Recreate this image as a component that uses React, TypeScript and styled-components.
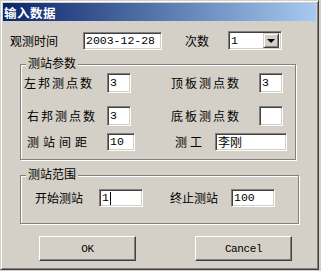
import React from "react";
import styled, { createGlobalStyle } from "styled-components";

const Global = createGlobalStyle`
  html, body { margin: 0; padding: 0; background: #d4d0c8; }
  * { box-sizing: border-box; }
`;

const cjk = `"Noto Sans CJK SC", "Noto Sans", sans-serif`;
const mono = `"Liberation Mono", "DejaVu Sans Mono", monospace`;

const Window = styled.div`
  width: 319px;
  height: 270px;
  background: #d4d0c8;
  border: 1px solid;
  border-color: #d4d0c8 #404040 #404040 #d4d0c8;
  box-shadow: inset 1px 1px #fff, inset -1px -1px #808080;
  padding: 2px;
  display: flex;
  flex-direction: column;
  font-family: ${cjk};
  font-size: 12px;
  color: #000;
`;

const TitleBar = styled.div`
  height: 18px;
  flex-shrink: 0;
  display: flex;
  align-items: center;
  padding-left: 1px;
  background: linear-gradient(to right, #0a246a, #a6caf0);
  color: #fff;
  font-weight: bold;
  font-size: 12.5px;
  letter-spacing: 0.5px;
`;

const Row = styled.div<{ $indent: number; $mt: number; $h: number }>`
  display: flex;
  align-items: center;
  padding-left: ${(p) => p.$indent}px;
  margin-top: ${(p) => p.$mt}px;
  height: ${(p) => p.$h}px;
`;

const Label = styled.span<{ $w: number; $ls?: number; $ml?: number }>`
  width: ${(p) => p.$w}px;
  margin-left: ${(p) => p.$ml ?? 0}px;
  letter-spacing: ${(p) => p.$ls ?? 0}px;
  flex-shrink: 0;
  white-space: nowrap;
  line-height: 14px;
`;

const TextBox = styled.div<{ $w: number; $h: number }>`
  width: ${(p) => p.$w}px;
  height: ${(p) => p.$h}px;
  flex-shrink: 0;
  background: #fff;
  border: 1px solid;
  border-color: #808080 #fff #fff #808080;
  box-shadow: inset 1px 1px #404040, inset -1px -1px #d4d0c8;
  display: flex;
  align-items: center;
  padding-left: 2px;
  font-family: ${mono};
  font-size: 11.5px;
  line-height: 12px;
  white-space: nowrap;
  overflow: hidden;
`;

const CjkText = styled.span`
  font-family: ${cjk};
  font-size: 12px;
`;

const Caret = styled.span`
  display: inline-block;
  width: 1px;
  height: 13px;
  background: #000;
  margin-left: 1px;
`;

const SelectBox = styled(TextBox)`
  padding-right: 2px;
  justify-content: space-between;
`;

const DropButton = styled.div`
  width: 16px;
  height: 15px;
  background: #d4d0c8;
  border: 1px solid;
  border-color: #d4d0c8 #404040 #404040 #d4d0c8;
  box-shadow: inset 1px 1px #fff, inset -1px -1px #808080;
  display: flex;
  align-items: center;
  justify-content: center;
`;

const Arrow = styled.span`
  width: 0;
  height: 0;
  border-left: 4px solid transparent;
  border-right: 4px solid transparent;
  border-top: 4px solid #000;
  margin-top: 1px;
`;

const Group = styled.div<{ $w: number; $mt: number; $pb: number }>`
  width: ${(p) => p.$w}px;
  margin-left: 17px;
  margin-top: ${(p) => p.$mt}px;
  padding-bottom: ${(p) => p.$pb}px;
  border: 1px solid #808080;
  box-shadow: inset 1px 1px #fff, 1px 1px #fff;
  display: flex;
  flex-direction: column;
`;

const Legend = styled.span`
  align-self: flex-start;
  margin-top: -8px;
  margin-left: 5px;
  padding: 0 2px;
  background: #d4d0c8;
  line-height: 12px;
  height: 12px;
  font-size: 12px;
`;

const ButtonRow = styled.div`
  display: flex;
  gap: 59px;
  padding-left: 36px;
  margin-top: 12px;
`;

const Button = styled.div`
  width: 97px;
  height: 25px;
  background: #d4d0c8;
  border: 1px solid;
  border-color: #fff #404040 #404040 #fff;
  box-shadow: inset -1px -1px #808080, inset 1px 1px #d4d0c8;
  display: flex;
  align-items: center;
  justify-content: center;
  font-family: ${mono};
  font-size: 11px;
  letter-spacing: -0.4px;
  padding-top: 1px;
`;

export default function App() {
  return (
    <>
      <Global />
      <Window>
        <TitleBar>输入数据</TitleBar>

        <Row $indent={7} $mt={10} $h={19}>
          <Label $w={73}>观测时间</Label>
          <TextBox $w={79} $h={18}>2003-12-28</TextBox>
          <Label $w={43} $ml={23}>次数</Label>
          <SelectBox $w={54} $h={19}>
            <span>1</span>
            <DropButton>
              <Arrow />
            </DropButton>
          </SelectBox>
        </Row>

        <Group $w={276} $mt={14} $pb={8}>
          <Legend>测站参数</Legend>
          <Row $indent={3} $mt={4} $h={20}>
            <Label $w={83} $ls={2}>左邦测点数</Label>
            <TextBox $w={24} $h={20}>3</TextBox>
            <Label $w={88} $ml={40} $ls={2}>顶板测点数</Label>
            <TextBox $w={24} $h={20}>3</TextBox>
          </Row>
          <Row $indent={6} $mt={13} $h={20}>
            <Label $w={80} $ls={2}>右邦测点数</Label>
            <TextBox $w={24} $h={20}>3</TextBox>
            <Label $w={88} $ml={40} $ls={2}>底板测点数</Label>
            <TextBox $w={24} $h={20} />
          </Row>
          <Row $indent={6} $mt={7} $h={18}>
            <Label $w={80} $ls={4}>测站间距</Label>
            <TextBox $w={28} $h={18}>10</TextBox>
            <Label $w={40} $ml={40} $ls={3}>测工</Label>
            <TextBox $w={72} $h={18}>
              <CjkText>李刚</CjkText>
            </TextBox>
          </Row>
        </Group>

        <Group $w={279} $mt={15} $pb={16}>
          <Legend>测站范围</Legend>
          <Row $indent={14} $mt={9} $h={18}>
            <Label $w={64}>开始测站</Label>
            <TextBox $w={44} $h={18}>
              1<Caret />
            </TextBox>
            <Label $w={61} $ml={27}>终止测站</Label>
            <TextBox $w={44} $h={18}>100</TextBox>
          </Row>
        </Group>

        <ButtonRow>
          <Button>OK</Button>
          <Button>Cancel</Button>
        </ButtonRow>
      </Window>
    </>
  );
}
